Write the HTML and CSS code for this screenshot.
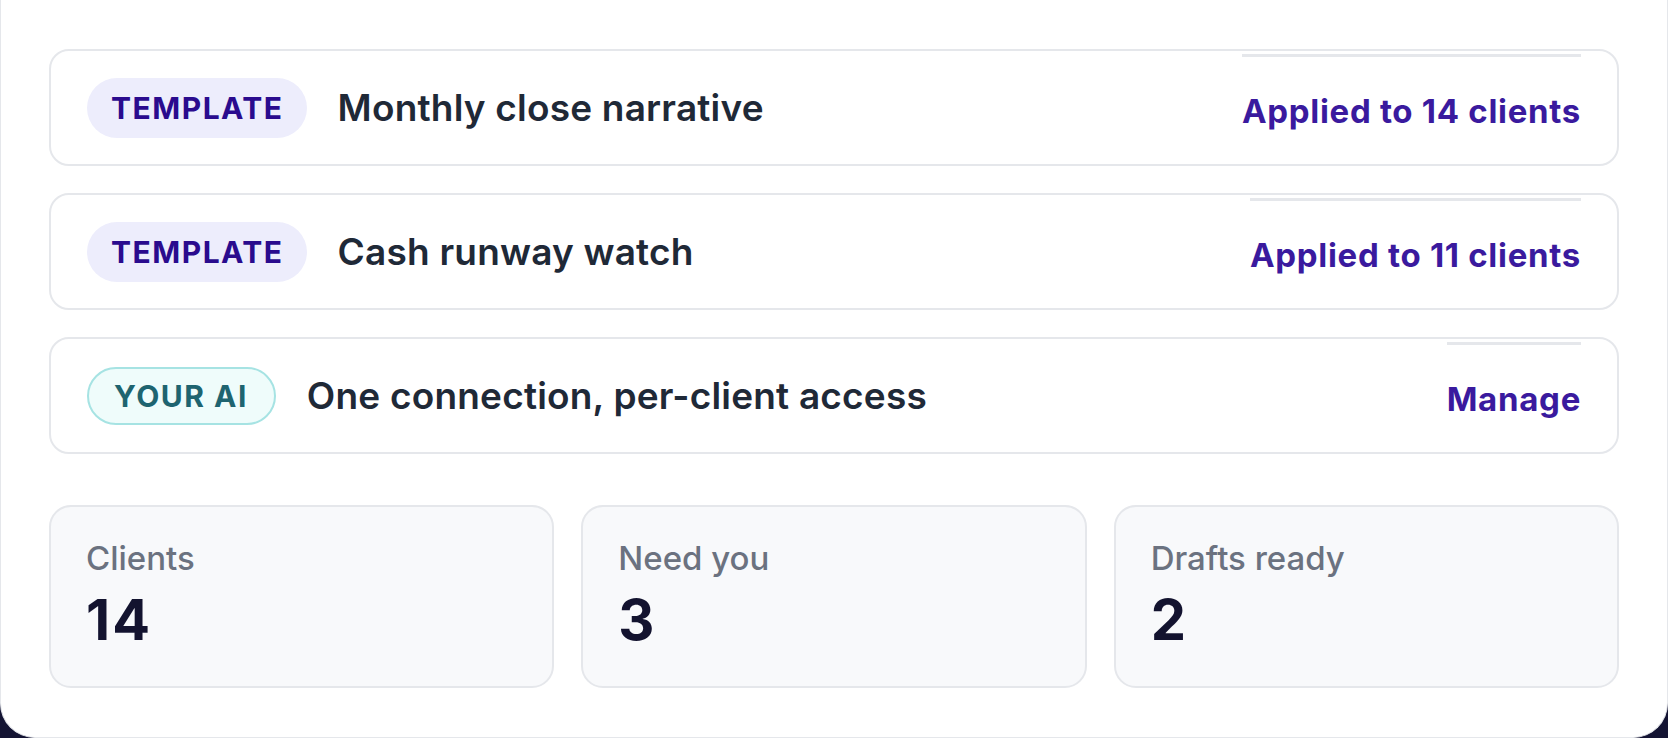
FILE: index.html
```html
<!DOCTYPE html>
<html lang="en">
<head>
    <meta charset="UTF-8">
    <meta name="viewport" content="width=device-width, initial-scale=1.0">
    <title>Practice overview</title>
    <link rel="stylesheet" href="styles.css">
</head>
<body>

    <div class="panel">
        <div class="rows">
            <div class="row">
                <span class="tag tag-template">TEMPLATE</span>
                <span class="row-title">Monthly close narrative</span>
                <div class="meta">
                    <div class="meta-bar"></div>
                    <a class="meta-link" href="#">Applied to 14 clients</a>
                </div>
            </div>
            <div class="row">
                <span class="tag tag-template">TEMPLATE</span>
                <span class="row-title">Cash runway watch</span>
                <div class="meta">
                    <div class="meta-bar"></div>
                    <a class="meta-link" href="#">Applied to 11 clients</a>
                </div>
            </div>
            <div class="row">
                <span class="tag tag-ai">YOUR AI</span>
                <span class="row-title">One connection, per-client access</span>
                <div class="meta">
                    <div class="meta-bar"></div>
                    <a class="meta-link" href="#">Manage</a>
                </div>
            </div>
        </div>

        <div class="stats">
            <div class="stat">
                <div class="stat-label">Clients</div>
                <div class="stat-value">14</div>
            </div>
            <div class="stat">
                <div class="stat-label">Need you</div>
                <div class="stat-value">3</div>
            </div>
            <div class="stat">
                <div class="stat-label">Drafts ready</div>
                <div class="stat-value">2</div>
            </div>
        </div>
    </div>

</body>
</html>
```

FILE: styles.css
```css
* {
    box-sizing: border-box;
}
html, body {
    margin: 0;
    height: 100%;
}
body {
    font-family: Inter, "Noto Sans", sans-serif;
    background: #141433;
    overflow: hidden;
}
.panel {
    height: 738px;
    background: white;
    border: 1px solid #e5e7eb;
    border-top: none;
    border-radius: 0 0 35px 35px;
    padding: 49px 48px 0 48px;
}
.rows {
    display: flex;
    flex-direction: column;
    gap: 27px;
}
.row {
    height: 117px;
    display: flex;
    align-items: center;
    padding: 0 36px;
    border: 2px solid #e5e7eb;
    border-radius: 20px;
    background: white;
}
.tag {
    display: inline-flex;
    align-items: center;
    height: 60px;
    border-radius: 30px;
    font-size: 30px;
    font-weight: 700;
    letter-spacing: 1.5px;
    flex-shrink: 0;
}
.tag-template {
    padding: 0 23px 0 24px;
    background: #ededfc;
    color: #2a0b8e;
}
.tag-ai {
    height: 58px;
    padding: 0 26px 0 25px;
    background: #effcfb;
    border: 2px solid #a6e3e3;
    color: #1e6470;
}
.row-title {
    margin-left: 31px;
    font-size: 37px;
    font-weight: 600;
    letter-spacing: 0.2px;
    color: #1f2937;
    flex: 1;
}
.meta {
    align-self: stretch;
    display: flex;
    flex-direction: column;
    padding-top: 3px;
}
.meta-bar {
    height: 3px;
    background: #e5e7eb;
}
.meta-link {
    margin: auto 0;
    font-size: 33px;
    font-weight: 700;
    letter-spacing: 0.7px;
    color: #3a1a9e;
    text-decoration: none;
    white-space: nowrap;
}
.stats {
    display: grid;
    grid-template-columns: repeat(3, 1fr);
    gap: 27px;
    margin-top: 51px;
}
.stat {
    height: 183px;
    padding: 32px 34px 0 35px;
    background: #f8f9fb;
    border: 2px solid #e5e7eb;
    border-radius: 22px;
}
.stat-label {
    font-size: 33px;
    font-weight: 500;
    line-height: 38px;
    color: #6b7280;
}
.stat-value {
    margin-top: 10px;
    font-size: 56px;
    font-weight: 700;
    line-height: 67px;
    letter-spacing: 2px;
    color: #13132f;
}
```
